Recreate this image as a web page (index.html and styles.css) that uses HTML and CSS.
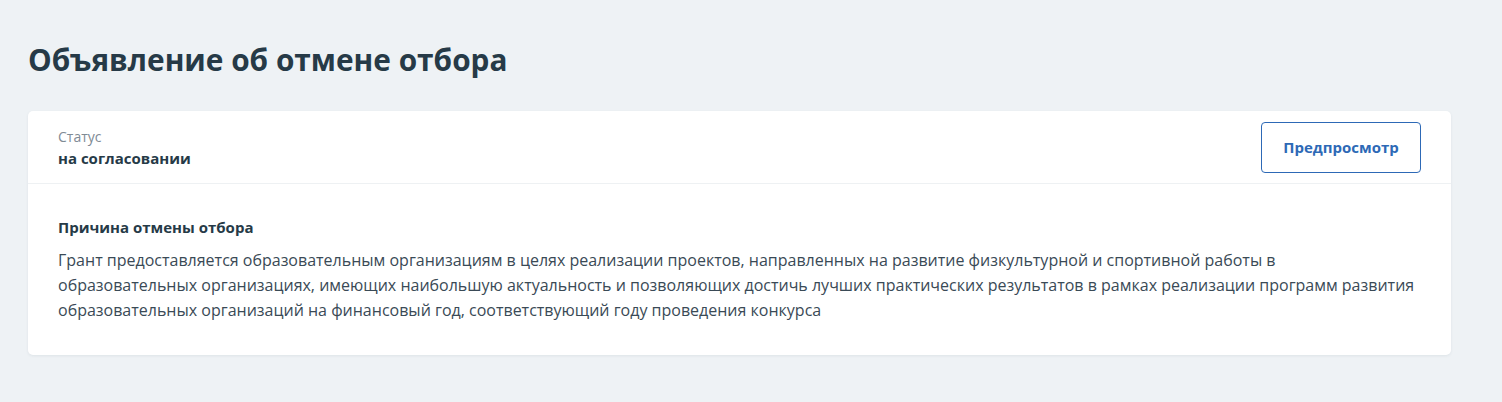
FILE: index.html
```html
<!DOCTYPE html>
<html lang="ru">
<head>
<meta charset="utf-8">
<link rel="stylesheet" href="styles.css">
</head>
<body>
<main class="page">
  <h1 class="title">Объявление об отмене отбора</h1>
  <section class="card">
    <div class="card-head">
      <div class="status">
        <div class="status-label">Статус</div>
        <div class="status-value">на согласовании</div>
      </div>
      <button class="btn">Предпросмотр</button>
    </div>
    <div class="card-body">
      <div class="reason-title">Причина отмены отбора</div>
      <p class="reason-text">Грант предоставляется образовательным организациям в целях реализации проектов, направленных на развитие физкультурной и спортивной работы в образовательных организациях, имеющих наибольшую актуальность и позволяющих достичь лучших практических результатов в рамках реализации программ развития образовательных организаций на финансовый год, соответствующий году проведения конкурса</p>
    </div>
  </section>
</main>
</body>
</html>
```

FILE: styles.css
```css
* { box-sizing: border-box; }
html, body { margin: 0; padding: 0; }
body {
  background: #eef2f5;
  font-family: "Open Sans", "Liberation Sans", sans-serif;
  color: #2b3d4a;
}
.page {
  padding: 40px 51px 40px 28px;
}
.title {
  margin: 0 0 31px;
  font-family: "Open Sans", sans-serif;
  font-weight: 700;
  font-size: 29.8px;
  line-height: 40px;
  color: #263a47;
}
.card {
  background: #fff;
  border-radius: 5px;
  box-shadow: 0 1px 3px rgba(40, 60, 80, 0.08);
}
.card-head {
  display: flex;
  justify-content: space-between;
  align-items: center;
  padding: 11px 30px 11px 30px;
  border-bottom: 1px solid #eef1f3;
  height: 73px;
}
.status {
  padding-top: 2px;
}
.status-label {
  font-size: 14px;
  line-height: 20px;
  color: #7f8b95;
}
.status-value {
  font-size: 15px;
  line-height: 22px;
  font-weight: 700;
  color: #263a47;
}
.btn {
  width: 160px;
  height: 51px;
  background: #fff;
  border: 1px solid #2d69b6;
  border-radius: 4px;
  color: #2d69b6;
  font-family: inherit;
  font-size: 15px;
  font-weight: 700;
  cursor: pointer;
}
.card-body {
  padding: 32px 30px 32px;
}
.reason-title {
  font-size: 15px;
  line-height: 22px;
  font-weight: 700;
  color: #263a47;
  margin-bottom: 10px;
}
.reason-text {
  margin: 0;
  max-width: 1359px;
  font-size: 16px;
  line-height: 25px;
  color: #3a4a56;
}
```
